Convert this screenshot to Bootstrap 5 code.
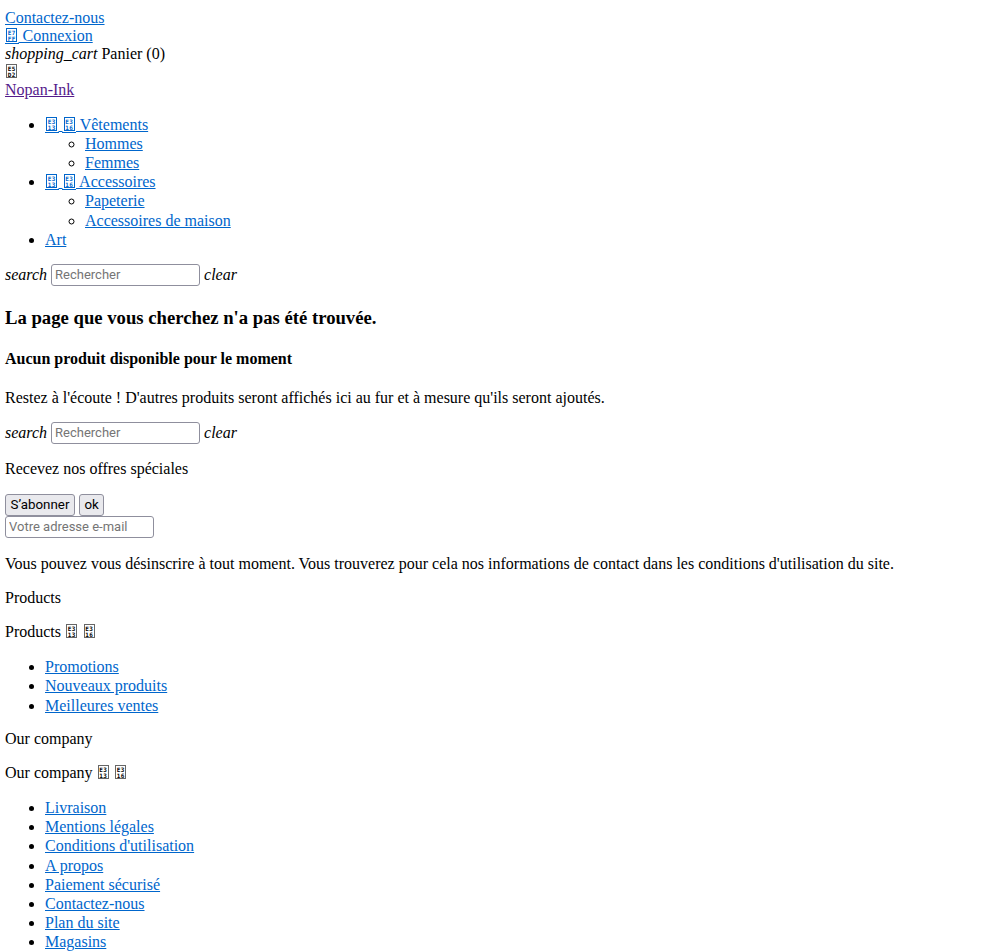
<!DOCTYPE html>
<html lang="fr">
<head>
  <meta charset="UTF-8">
  <meta name="viewport" content="width=device-width, initial-scale=1.0">
  <title>Nopan-Ink</title>
  <link rel="stylesheet" href="https://cdn.jsdelivr.net/npm/bootstrap@5.3.3/dist/css/bootstrap.min.css">
  <style>
    body { margin: 0; padding: 9.4px 5px 0; height: 951px; overflow: hidden; background: #fff; color: #000; font-family: "Liberation Serif", "Times New Roman", serif; font-size: 16px; line-height: normal; }
    a { color: #0066cc; text-decoration: underline; }
    a.seen { color: #551a8b; }
    ul { margin: 16px 0; padding-left: 40px; list-style: disc; }
    ul ul { margin: 0; list-style: circle; }
    li { margin: 0; }
    p { margin: 16px 0; }
    i { font-style: italic; }
    .top-line { display: block; height: 18px; }
    .nav-list { margin: 15.2px 0 16.8px; }
    .nav-list ul { margin: 0; }
    .nav-list li { line-height: 19.2px; }
    .search-row { display: flex; align-items: center; gap: 4px; height: 22px; margin-top: -2px; }
    .search-row input, .mail-input { font-family: Roboto, "Liberation Sans", sans-serif; font-size: 13px; width: 149px; height: 22px; padding: 1px 3px; border: 1px solid #8f8f9d; border-radius: 3px; background: #fff; color: #000; }
    input::placeholder { color: #757575; opacity: 1; }
    .page-title { font: bold 18.7px "Liberation Serif", serif; margin: 21px 0 0; }
    .sub-title { font: bold 16px "Liberation Serif", serif; margin: 21px 0 0; }
    .after-sub { margin-top: 21px; margin-bottom: 17px; }
    .before-btn { margin-top: 16px; margin-bottom: 16px; }
    .after-mail { margin-top: 17px; }
    .form-btn { font-family: Roboto, "Liberation Sans", sans-serif; font-size: 13.33px; height: 22px; padding: 1px 4.5px; border: 1px solid #8f8f9d; border-radius: 3px; background: #e9e9ed; color: #000; line-height: 18px; }
    .btn-row { display: flex; gap: 4px; }
    .mail-input { display: block; }
    .foot-list li { line-height: 19.2px; }
    .foot-first { margin: 16.4px 0 15.2px; }
    .foot-head { margin-top: 0; }
    /* missing-glyph boxes of the icon font */
    .tofu { display: inline-block; position: relative; width: 11px; height: 14px; margin: -2px 1.25px 0; vertical-align: 0; border: 1px solid currentColor; font: bold 6px/6px "DejaVu Sans Mono", monospace; letter-spacing: .4px; text-align: center; padding-top: 1px; white-space: pre-line; text-decoration: none; }
    .tofu.plain { border-color: #666; }
    a .tofu::after { content: ""; position: absolute; left: -2.5px; right: -2.5px; bottom: -3px; height: 1px; background: currentColor; }
  </style>
</head>
<body>
  <a class="top-line" href="#">Contactez-nous</a>
  <a class="top-line" href="#"><span class="tofu">E7
FF</span> Connexion</a>
  <div class="top-line"><i>shopping_cart</i> Panier (0)</div>
  <div class="top-line"><span class="tofu plain">E5
D2</span></div>
  <a class="top-line seen" href="#">Nopan-Ink</a>

  <ul class="nav-list">
    <li><a href="#"><span class="tofu">E3
13</span> <span class="tofu">E3
16</span> Vêtements</a>
      <ul>
        <li><a href="#">Hommes</a></li>
        <li><a href="#">Femmes</a></li>
      </ul>
    </li>
    <li><a href="#"><span class="tofu">E3
13</span> <span class="tofu">E3
16</span> Accessoires</a>
      <ul>
        <li><a href="#">Papeterie</a></li>
        <li><a href="#">Accessoires de maison</a></li>
      </ul>
    </li>
    <li><a href="#">Art</a></li>
  </ul>

  <div class="search-row"><i>search</i> <input type="text" placeholder="Rechercher"> <i>clear</i></div>

  <h1 class="page-title">La page que vous cherchez n'a pas été trouvée.</h1>
  <h4 class="sub-title">Aucun produit disponible pour le moment</h4>
  <p class="after-sub">Restez à l'écoute ! D'autres produits seront affichés ici au fur et à mesure qu'ils seront ajoutés.</p>

  <div class="search-row"><i>search</i> <input type="text" placeholder="Rechercher"> <i>clear</i></div>

  <p class="before-btn">Recevez nos offres spéciales</p>
  <div class="btn-row"><button class="form-btn">S’abonner</button><button class="form-btn">ok</button></div>
  <input class="mail-input" type="text" placeholder="Votre adresse e-mail">
  <p class="after-mail">Vous pouvez vous désinscrire à tout moment. Vous trouverez pour cela nos informations de contact dans les conditions d'utilisation du site.</p>

  <p>Products</p>
  <p>Products <span class="tofu plain">E3
13</span> <span class="tofu plain">E3
16</span></p>
  <ul class="foot-list foot-first">
    <li><a href="#">Promotions</a></li>
    <li><a href="#">Nouveaux produits</a></li>
    <li><a href="#">Meilleures ventes</a></li>
  </ul>

  <p class="foot-head">Our company</p>
  <p>Our company <span class="tofu plain">E3
13</span> <span class="tofu plain">E3
16</span></p>
  <ul class="foot-list">
    <li><a href="#">Livraison</a></li>
    <li><a href="#">Mentions légales</a></li>
    <li><a href="#">Conditions d'utilisation</a></li>
    <li><a href="#">A propos</a></li>
    <li><a href="#">Paiement sécurisé</a></li>
    <li><a href="#">Contactez-nous</a></li>
    <li><a href="#">Plan du site</a></li>
    <li><a href="#">Magasins</a></li>
  </ul>
  <script src="https://cdn.jsdelivr.net/npm/bootstrap@5.3.3/dist/js/bootstrap.bundle.min.js"></script>
</body>
</html>
